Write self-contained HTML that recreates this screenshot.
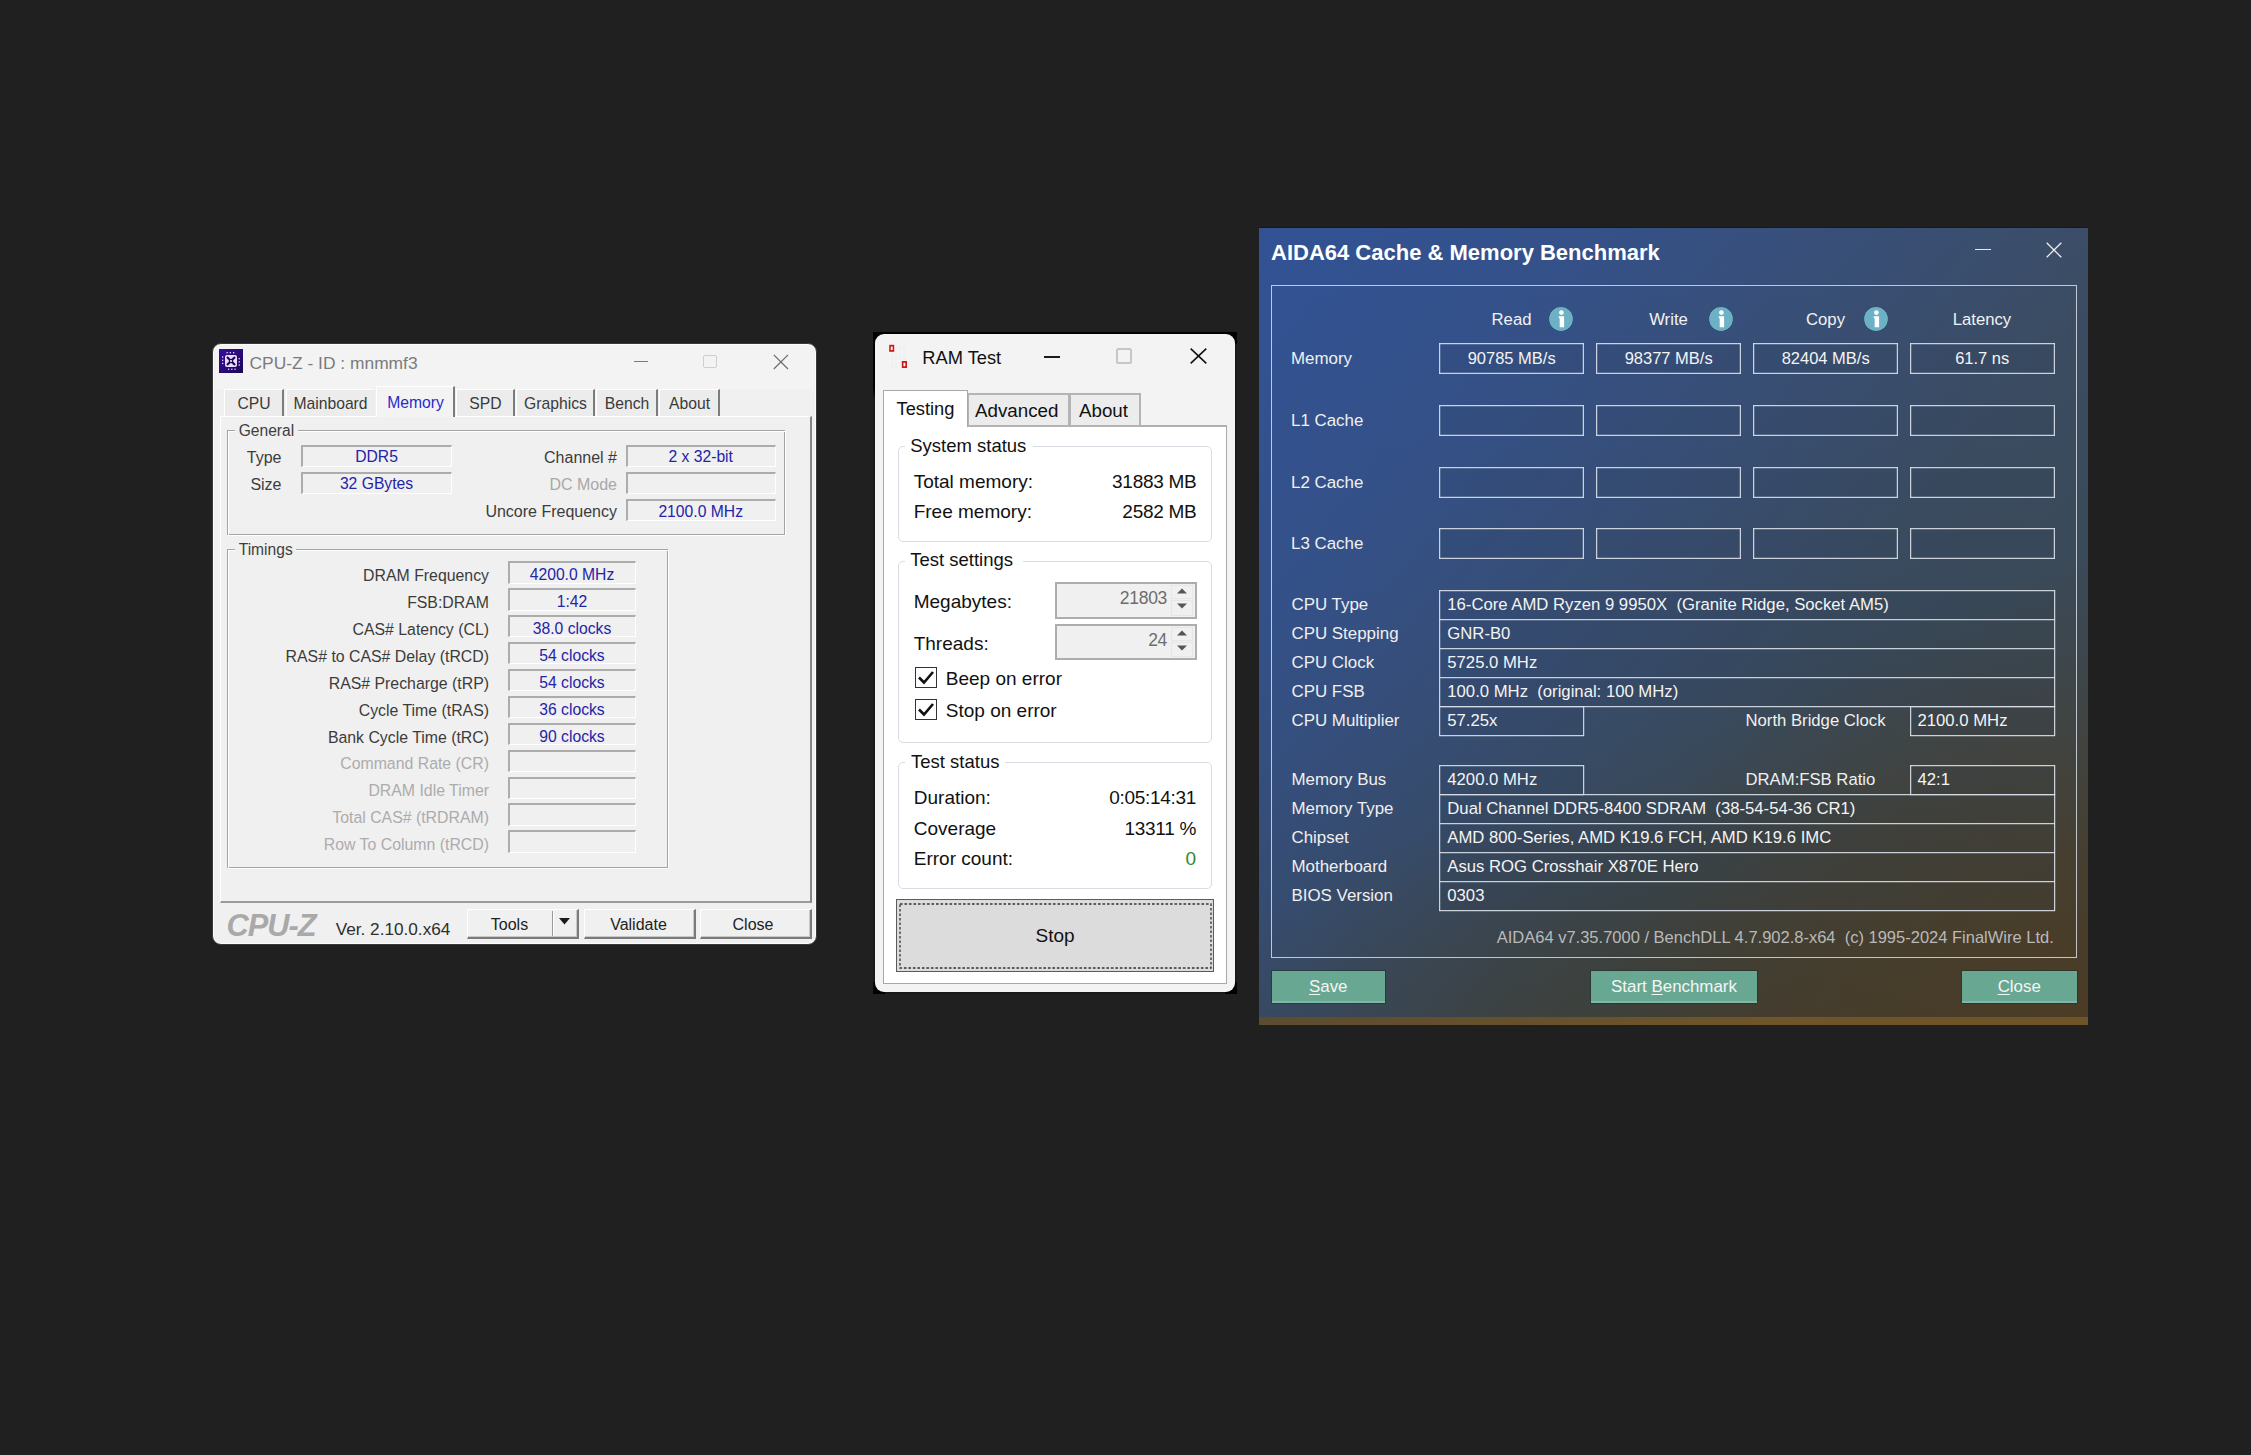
<!DOCTYPE html><html><head><meta charset="utf-8"><style>
html,body{margin:0;padding:0;width:2251px;height:1455px;overflow:hidden;background:#202020;}
body{position:relative;font-family:"Liberation Sans",sans-serif;}
</style></head><body>
<div style="position:absolute;left:212.00px;top:343.00px;width:605.00px;height:601.50px;background:#f0f0f0;border:1px solid #3a3a3a;border-radius:9px;box-sizing:border-box;box-shadow:inset 0 0 0 1px #fbfbfb;"></div>
<div style="position:absolute;left:215.00px;top:345.00px;width:599.00px;height:44.00px;background:#f3f3f3;border-radius:7px 7px 0 0;"></div>
<svg style="position:absolute;left:219px;top:349px" width="24" height="24" viewBox="0 0 24 24">
<defs><linearGradient id="cg" x1="0" y1="0" x2="1" y2="1"><stop offset="0" stop-color="#3a0e9a"/><stop offset="1" stop-color="#1c0656"/></linearGradient></defs>
<rect width="24" height="24" fill="url(#cg)"/>
<rect x="6" y="6" width="12" height="12" rx="2" fill="#eadcff"/>
<path d="M8 8 L16 16 M16 8 L8 16" stroke="#1c0656" stroke-width="2.2"/>
<circle cx="12" cy="12" r="2.2" fill="#1c0656"/><circle cx="12" cy="12" r="1" fill="#fff"/>
<g fill="#e6d6ff"><rect x="7.5" y="3" width="1.3" height="1.3"/><rect x="10.7" y="3" width="1.3" height="1.3"/><rect x="14" y="3" width="1.3" height="1.3"/>
<rect x="9" y="19.6" width="1.3" height="1.3"/><rect x="12.2" y="19.6" width="1.3" height="1.3"/><rect x="15.4" y="19.6" width="1.3" height="1.3"/>
<rect x="3" y="7.4" width="1.3" height="1.3"/><rect x="3" y="10.6" width="1.3" height="1.3"/><rect x="3" y="13.8" width="1.3" height="1.3"/>
<rect x="19.6" y="9" width="1.3" height="1.3"/><rect x="19.6" y="12.2" width="1.3" height="1.3"/><rect x="19.6" y="15.4" width="1.3" height="1.3"/></g>
</svg>
<div style="position:absolute;left:249.50px;top:354.77px;font:400 17.4px/17.4px 'Liberation Sans',sans-serif;color:#7b7b7b;white-space:pre;">CPU-Z - ID : mnmmf3</div>
<div style="position:absolute;left:633.50px;top:360.50px;width:14.50px;height:1.00px;background:#7a7a7a;"></div>
<div style="position:absolute;left:702.50px;top:354.50px;width:14.00px;height:13.50px;border:1px solid #cfcfcf;border-radius:2px;box-sizing:border-box;"></div>
<svg style="position:absolute;left:773px;top:354px" width="16" height="16" viewBox="0 0 16 16"><path d="M0.8 0.8 L15 15 M15 0.8 L0.8 15" stroke="#6a6a6a" stroke-width="1.2"/></svg>
<div style="position:absolute;left:220.00px;top:416.00px;width:591.50px;height:487.00px;border-left:1px solid #fff;border-top:1px solid #fff;border-right:2px solid #858585;border-bottom:2px solid #9a9a9a;box-sizing:border-box;"></div>
<div style="position:absolute;left:224.00px;top:389.00px;width:60.00px;height:27.00px;background:#ececec;border-top:1px solid #fff;border-left:1px solid #fff;border-right:2px solid #7c7c7c;box-sizing:border-box;"></div>
<div style="position:absolute;left:154.00px;width:200px;text-align:center;top:396.21px;font:400 15.7px/15.7px 'Liberation Sans',sans-serif;color:#3a3a3a;white-space:pre;">CPU</div>
<div style="position:absolute;left:286.00px;top:389.00px;width:89.00px;height:27.00px;background:#ececec;border-top:1px solid #fff;border-left:1px solid #fff;border-right:2px solid transparent;box-sizing:border-box;"></div>
<div style="position:absolute;left:230.50px;width:200px;text-align:center;top:396.21px;font:400 15.7px/15.7px 'Liberation Sans',sans-serif;color:#3a3a3a;white-space:pre;">Mainboard</div>
<div style="position:absolute;left:376.00px;top:386.00px;width:79.00px;height:31.00px;background:#f3f3f3;border-top:1px solid #fff;border-left:1px solid #fff;border-right:2px solid #7c7c7c;box-sizing:border-box;"></div>
<div style="position:absolute;left:315.50px;width:200px;text-align:center;top:395.21px;font:400 15.7px/15.7px 'Liberation Sans',sans-serif;color:#2a2acc;white-space:pre;">Memory</div>
<div style="position:absolute;left:456.00px;top:389.00px;width:59.00px;height:27.00px;background:#ececec;border-top:1px solid #fff;border-left:1px solid #fff;border-right:2px solid #7c7c7c;box-sizing:border-box;"></div>
<div style="position:absolute;left:385.50px;width:200px;text-align:center;top:396.21px;font:400 15.7px/15.7px 'Liberation Sans',sans-serif;color:#3a3a3a;white-space:pre;">SPD</div>
<div style="position:absolute;left:516.00px;top:389.00px;width:79.00px;height:27.00px;background:#ececec;border-top:1px solid #fff;border-left:1px solid #fff;border-right:2px solid #7c7c7c;box-sizing:border-box;"></div>
<div style="position:absolute;left:455.50px;width:200px;text-align:center;top:396.21px;font:400 15.7px/15.7px 'Liberation Sans',sans-serif;color:#3a3a3a;white-space:pre;">Graphics</div>
<div style="position:absolute;left:596.00px;top:389.00px;width:62.00px;height:27.00px;background:#ececec;border-top:1px solid #fff;border-left:1px solid #fff;border-right:2px solid #7c7c7c;box-sizing:border-box;"></div>
<div style="position:absolute;left:527.00px;width:200px;text-align:center;top:396.21px;font:400 15.7px/15.7px 'Liberation Sans',sans-serif;color:#3a3a3a;white-space:pre;">Bench</div>
<div style="position:absolute;left:659.00px;top:389.00px;width:61.00px;height:27.00px;background:#ececec;border-top:1px solid #fff;border-left:1px solid #fff;border-right:2px solid #7c7c7c;box-sizing:border-box;"></div>
<div style="position:absolute;left:589.50px;width:200px;text-align:center;top:396.21px;font:400 15.7px/15.7px 'Liberation Sans',sans-serif;color:#3a3a3a;white-space:pre;">About</div>
<div style="position:absolute;left:227.00px;top:429.50px;width:558.00px;height:105.00px;border:1px solid #a4a4a4;box-sizing:border-box;"></div>
<div style="position:absolute;left:228.00px;top:430.50px;width:558.00px;height:105.00px;border:1px solid #ffffff;border-left-color:#fff;box-sizing:border-box;"></div>
<div style="position:absolute;left:227.00px;top:429.50px;width:558.00px;height:105.00px;border:1px solid #a4a4a4;border-right-color:transparent;border-bottom-color:transparent;box-sizing:border-box;"></div>
<div style="position:absolute;left:235.00px;top:420.00px;width:63.00px;height:20.00px;background:#f0f0f0;"></div>
<div style="position:absolute;left:238.70px;top:423.09px;font:400 15.6px/15.6px 'Liberation Sans',sans-serif;color:#3e3e3e;white-space:pre;">General</div>
<div style="position:absolute;left:301.00px;top:444.50px;width:151.00px;height:22.00px;background:#f0f0f0;border-top:2px solid #acacac;border-left:2px solid #acacac;border-right:1px solid #fff;border-bottom:1px solid #fff;box-sizing:border-box;"></div>
<div style="position:absolute;left:301.00px;top:471.50px;width:151.00px;height:22.00px;background:#f0f0f0;border-top:2px solid #acacac;border-left:2px solid #acacac;border-right:1px solid #fff;border-bottom:1px solid #fff;box-sizing:border-box;"></div>
<div style="position:absolute;left:-918.50px;width:1200px;text-align:right;top:450.26px;font:400 16px/16px 'Liberation Sans',sans-serif;color:#3c3c3c;white-space:pre;">Type</div>
<div style="position:absolute;left:276.50px;width:200px;text-align:center;top:449.21px;font:400 15.7px/15.7px 'Liberation Sans',sans-serif;color:#2424a8;white-space:pre;">DDR5</div>
<div style="position:absolute;left:-918.50px;width:1200px;text-align:right;top:476.96px;font:400 16px/16px 'Liberation Sans',sans-serif;color:#3c3c3c;white-space:pre;">Size</div>
<div style="position:absolute;left:276.50px;width:200px;text-align:center;top:476.21px;font:400 15.7px/15.7px 'Liberation Sans',sans-serif;color:#2424a8;white-space:pre;">32 GBytes</div>
<div style="position:absolute;left:625.50px;top:444.50px;width:150.50px;height:22.00px;background:#f0f0f0;border-top:2px solid #acacac;border-left:2px solid #acacac;border-right:1px solid #fff;border-bottom:1px solid #fff;box-sizing:border-box;"></div>
<div style="position:absolute;left:625.50px;top:471.50px;width:150.50px;height:22.00px;background:#f0f0f0;border-top:2px solid #acacac;border-left:2px solid #acacac;border-right:1px solid #fff;border-bottom:1px solid #fff;box-sizing:border-box;"></div>
<div style="position:absolute;left:625.50px;top:498.50px;width:150.50px;height:22.00px;background:#f0f0f0;border-top:2px solid #acacac;border-left:2px solid #acacac;border-right:1px solid #fff;border-bottom:1px solid #fff;box-sizing:border-box;"></div>
<div style="position:absolute;left:-583.00px;width:1200px;text-align:right;top:450.46px;font:400 16px/16px 'Liberation Sans',sans-serif;color:#3c3c3c;white-space:pre;">Channel #</div>
<div style="position:absolute;left:600.70px;width:200px;text-align:center;top:449.21px;font:400 15.7px/15.7px 'Liberation Sans',sans-serif;color:#2424a8;white-space:pre;">2 x 32-bit</div>
<div style="position:absolute;left:-583.00px;width:1200px;text-align:right;top:477.46px;font:400 16px/16px 'Liberation Sans',sans-serif;color:#a8a8a8;white-space:pre;">DC Mode</div>
<div style="position:absolute;left:-583.00px;width:1200px;text-align:right;top:504.46px;font:400 16px/16px 'Liberation Sans',sans-serif;color:#3c3c3c;white-space:pre;">Uncore Frequency</div>
<div style="position:absolute;left:600.70px;width:200px;text-align:center;top:503.71px;font:400 15.7px/15.7px 'Liberation Sans',sans-serif;color:#2424a8;white-space:pre;">2100.0 MHz</div>
<div style="position:absolute;left:226.50px;top:549.00px;width:441.00px;height:318.50px;border:1px solid #a4a4a4;box-sizing:border-box;"></div>
<div style="position:absolute;left:227.50px;top:550.00px;width:441.00px;height:318.50px;border:1px solid #ffffff;border-left-color:#fff;box-sizing:border-box;"></div>
<div style="position:absolute;left:226.50px;top:549.00px;width:441.00px;height:318.50px;border:1px solid #a4a4a4;border-right-color:transparent;border-bottom-color:transparent;box-sizing:border-box;"></div>
<div style="position:absolute;left:235.00px;top:540.00px;width:61.00px;height:20.00px;background:#f0f0f0;"></div>
<div style="position:absolute;left:238.70px;top:542.29px;font:400 15.6px/15.6px 'Liberation Sans',sans-serif;color:#3e3e3e;white-space:pre;">Timings</div>
<div style="position:absolute;left:508.30px;top:561.00px;width:127.70px;height:22.60px;background:#f0f0f0;border-top:2px solid #acacac;border-left:2px solid #acacac;border-right:1px solid #fff;border-bottom:1px solid #fff;box-sizing:border-box;"></div>
<div style="position:absolute;left:-711.00px;width:1200px;text-align:right;top:567.88px;font:400 15.85px/15.85px 'Liberation Sans',sans-serif;color:#3c3c3c;white-space:pre;">DRAM Frequency</div>
<div style="position:absolute;left:472.00px;width:200px;text-align:center;top:567.01px;font:400 15.7px/15.7px 'Liberation Sans',sans-serif;color:#2424a8;white-space:pre;">4200.0 MHz</div>
<div style="position:absolute;left:508.30px;top:587.94px;width:127.70px;height:22.60px;background:#f0f0f0;border-top:2px solid #acacac;border-left:2px solid #acacac;border-right:1px solid #fff;border-bottom:1px solid #fff;box-sizing:border-box;"></div>
<div style="position:absolute;left:-711.00px;width:1200px;text-align:right;top:594.82px;font:400 15.85px/15.85px 'Liberation Sans',sans-serif;color:#3c3c3c;white-space:pre;">FSB:DRAM</div>
<div style="position:absolute;left:472.00px;width:200px;text-align:center;top:593.95px;font:400 15.7px/15.7px 'Liberation Sans',sans-serif;color:#2424a8;white-space:pre;">1:42</div>
<div style="position:absolute;left:508.30px;top:614.88px;width:127.70px;height:22.60px;background:#f0f0f0;border-top:2px solid #acacac;border-left:2px solid #acacac;border-right:1px solid #fff;border-bottom:1px solid #fff;box-sizing:border-box;"></div>
<div style="position:absolute;left:-711.00px;width:1200px;text-align:right;top:621.76px;font:400 15.85px/15.85px 'Liberation Sans',sans-serif;color:#3c3c3c;white-space:pre;">CAS# Latency (CL)</div>
<div style="position:absolute;left:472.00px;width:200px;text-align:center;top:620.89px;font:400 15.7px/15.7px 'Liberation Sans',sans-serif;color:#2424a8;white-space:pre;">38.0 clocks</div>
<div style="position:absolute;left:508.30px;top:641.82px;width:127.70px;height:22.60px;background:#f0f0f0;border-top:2px solid #acacac;border-left:2px solid #acacac;border-right:1px solid #fff;border-bottom:1px solid #fff;box-sizing:border-box;"></div>
<div style="position:absolute;left:-711.00px;width:1200px;text-align:right;top:648.70px;font:400 15.85px/15.85px 'Liberation Sans',sans-serif;color:#3c3c3c;white-space:pre;">RAS# to CAS# Delay (tRCD)</div>
<div style="position:absolute;left:472.00px;width:200px;text-align:center;top:647.83px;font:400 15.7px/15.7px 'Liberation Sans',sans-serif;color:#2424a8;white-space:pre;">54 clocks</div>
<div style="position:absolute;left:508.30px;top:668.76px;width:127.70px;height:22.60px;background:#f0f0f0;border-top:2px solid #acacac;border-left:2px solid #acacac;border-right:1px solid #fff;border-bottom:1px solid #fff;box-sizing:border-box;"></div>
<div style="position:absolute;left:-711.00px;width:1200px;text-align:right;top:675.64px;font:400 15.85px/15.85px 'Liberation Sans',sans-serif;color:#3c3c3c;white-space:pre;">RAS# Precharge (tRP)</div>
<div style="position:absolute;left:472.00px;width:200px;text-align:center;top:674.77px;font:400 15.7px/15.7px 'Liberation Sans',sans-serif;color:#2424a8;white-space:pre;">54 clocks</div>
<div style="position:absolute;left:508.30px;top:695.70px;width:127.70px;height:22.60px;background:#f0f0f0;border-top:2px solid #acacac;border-left:2px solid #acacac;border-right:1px solid #fff;border-bottom:1px solid #fff;box-sizing:border-box;"></div>
<div style="position:absolute;left:-711.00px;width:1200px;text-align:right;top:702.58px;font:400 15.85px/15.85px 'Liberation Sans',sans-serif;color:#3c3c3c;white-space:pre;">Cycle Time (tRAS)</div>
<div style="position:absolute;left:472.00px;width:200px;text-align:center;top:701.71px;font:400 15.7px/15.7px 'Liberation Sans',sans-serif;color:#2424a8;white-space:pre;">36 clocks</div>
<div style="position:absolute;left:508.30px;top:722.64px;width:127.70px;height:22.60px;background:#f0f0f0;border-top:2px solid #acacac;border-left:2px solid #acacac;border-right:1px solid #fff;border-bottom:1px solid #fff;box-sizing:border-box;"></div>
<div style="position:absolute;left:-711.00px;width:1200px;text-align:right;top:729.52px;font:400 15.85px/15.85px 'Liberation Sans',sans-serif;color:#3c3c3c;white-space:pre;">Bank Cycle Time (tRC)</div>
<div style="position:absolute;left:472.00px;width:200px;text-align:center;top:728.65px;font:400 15.7px/15.7px 'Liberation Sans',sans-serif;color:#2424a8;white-space:pre;">90 clocks</div>
<div style="position:absolute;left:508.30px;top:749.58px;width:127.70px;height:22.60px;background:#f0f0f0;border-top:2px solid #acacac;border-left:2px solid #acacac;border-right:1px solid #fff;border-bottom:1px solid #fff;box-sizing:border-box;"></div>
<div style="position:absolute;left:-711.00px;width:1200px;text-align:right;top:756.46px;font:400 15.85px/15.85px 'Liberation Sans',sans-serif;color:#acacac;white-space:pre;">Command Rate (CR)</div>
<div style="position:absolute;left:508.30px;top:776.52px;width:127.70px;height:22.60px;background:#f0f0f0;border-top:2px solid #acacac;border-left:2px solid #acacac;border-right:1px solid #fff;border-bottom:1px solid #fff;box-sizing:border-box;"></div>
<div style="position:absolute;left:-711.00px;width:1200px;text-align:right;top:783.40px;font:400 15.85px/15.85px 'Liberation Sans',sans-serif;color:#acacac;white-space:pre;">DRAM Idle Timer</div>
<div style="position:absolute;left:508.30px;top:803.46px;width:127.70px;height:22.60px;background:#f0f0f0;border-top:2px solid #acacac;border-left:2px solid #acacac;border-right:1px solid #fff;border-bottom:1px solid #fff;box-sizing:border-box;"></div>
<div style="position:absolute;left:-711.00px;width:1200px;text-align:right;top:810.34px;font:400 15.85px/15.85px 'Liberation Sans',sans-serif;color:#acacac;white-space:pre;">Total CAS# (tRDRAM)</div>
<div style="position:absolute;left:508.30px;top:830.40px;width:127.70px;height:22.60px;background:#f0f0f0;border-top:2px solid #acacac;border-left:2px solid #acacac;border-right:1px solid #fff;border-bottom:1px solid #fff;box-sizing:border-box;"></div>
<div style="position:absolute;left:-711.00px;width:1200px;text-align:right;top:837.28px;font:400 15.85px/15.85px 'Liberation Sans',sans-serif;color:#acacac;white-space:pre;">Row To Column (tRCD)</div>
<div style="position:absolute;left:226.50px;top:911.13px;font:700 30.8px/30.8px 'Liberation Sans',sans-serif;color:#a9a9a9;white-space:pre;font-style:italic;letter-spacing:-1px;">CPU-Z</div>
<div style="position:absolute;left:335.70px;top:920.74px;font:400 17.2px/17.2px 'Liberation Sans',sans-serif;color:#2e2e2e;white-space:pre;">Ver. 2.10.0.x64</div>
<div style="position:absolute;left:467.00px;top:909.00px;width:111.50px;height:30.00px;background:#f0f0f0;border-top:1px solid #fff;border-left:1px solid #fff;border-right:2px solid #7a7a7a;border-bottom:2px solid #7a7a7a;box-sizing:border-box;box-shadow:inset -1px -1px 0 #c8c8c8;"></div>
<div style="position:absolute;left:551.50px;top:911.00px;width:1.50px;height:25.00px;background:#9a9a9a;"></div>
<div style="position:absolute;left:553.00px;top:911.00px;width:1.00px;height:25.00px;background:#fff;"></div>
<div style="position:absolute;left:409.50px;width:200px;text-align:center;top:916.76px;font:400 16px/16px 'Liberation Sans',sans-serif;color:#222;white-space:pre;">Tools</div>
<svg style="position:absolute;left:558.5px;top:918px" width="11" height="7" viewBox="0 0 11 7"><path d="M0 0 H11 L5.5 6.5 Z" fill="#1a1a1a"/></svg>
<div style="position:absolute;left:583.50px;top:909.00px;width:112.50px;height:30.00px;background:#f0f0f0;border-top:1px solid #fff;border-left:1px solid #fff;border-right:2px solid #7a7a7a;border-bottom:2px solid #7a7a7a;box-sizing:border-box;box-shadow:inset -1px -1px 0 #c8c8c8;"></div>
<div style="position:absolute;left:538.50px;width:200px;text-align:center;top:916.76px;font:400 16px/16px 'Liberation Sans',sans-serif;color:#222;white-space:pre;">Validate</div>
<div style="position:absolute;left:700.00px;top:909.00px;width:111.50px;height:30.00px;background:#f0f0f0;border-top:1px solid #fff;border-left:1px solid #fff;border-right:2px solid #7a7a7a;border-bottom:2px solid #7a7a7a;box-sizing:border-box;box-shadow:inset -1px -1px 0 #c8c8c8;"></div>
<div style="position:absolute;left:653.00px;width:200px;text-align:center;top:916.76px;font:400 16px/16px 'Liberation Sans',sans-serif;color:#222;white-space:pre;">Close</div>
<div style="position:absolute;left:873.00px;top:332.00px;width:364.00px;height:662.00px;background:#1a1a1a;"></div>
<div style="position:absolute;left:873.00px;top:332.00px;width:12.00px;height:12.00px;background:#000;"></div>
<div style="position:absolute;left:1225.00px;top:332.00px;width:12.00px;height:12.00px;background:#000;"></div>
<div style="position:absolute;left:873.00px;top:982.00px;width:12.00px;height:12.00px;background:#000;"></div>
<div style="position:absolute;left:1225.00px;top:982.00px;width:12.00px;height:12.00px;background:#000;"></div>
<div style="position:absolute;left:873.00px;top:332.00px;width:364.00px;height:2.00px;background:#000;"></div>
<div style="position:absolute;left:873.00px;top:332.00px;width:2.00px;height:70.00px;background:linear-gradient(180deg,#000 80%,#1e1e1e);"></div>
<div style="position:absolute;left:875.00px;top:334.00px;width:360.00px;height:658.00px;background:#f3f3f3;border-radius:9px;"></div>
<svg style="position:absolute;left:886px;top:342px" width="30" height="30" viewBox="0 0 30 30">
<g fill="none" stroke="#ececec" stroke-width="1"><path d="M10 3v6M14 3v6M18 3v6M6 12v6M10 12v6M14 12v6M18 12v6M6 20v6M10 20v6M18 20v6"/></g>
<rect x="3.2" y="2.8" width="5" height="7" fill="#d01818"/><rect x="4.8" y="4.6" width="1.8" height="3.4" fill="#fff"/>
<rect x="15.8" y="19" width="5.2" height="7" fill="#d01818"/><rect x="17.5" y="20.8" width="1.8" height="3.4" fill="#fff"/>
</svg>
<div style="position:absolute;left:922.30px;top:348.81px;font:400 18.3px/18.3px 'Liberation Sans',sans-serif;color:#111;white-space:pre;">RAM Test</div>
<div style="position:absolute;left:1043.50px;top:355.70px;width:16.50px;height:2.00px;background:#1a1a1a;"></div>
<div style="position:absolute;left:1116.00px;top:347.50px;width:16.00px;height:16.00px;border:2px solid #c6c6c6;border-radius:2.5px;box-sizing:border-box;"></div>
<svg style="position:absolute;left:1190px;top:347.5px" width="17" height="16" viewBox="0 0 17 16"><path d="M0.7 0.7 L16.3 15.3 M16.3 0.7 L0.7 15.3" stroke="#111" stroke-width="1.6"/></svg>
<div style="position:absolute;left:883.00px;top:425.00px;width:344.00px;height:559.00px;background:#fff;border:1px solid #a8a8a8;border-top:2px solid #b0b0b0;box-sizing:border-box;"></div>
<div style="position:absolute;left:967.00px;top:393.00px;width:103.00px;height:34.00px;background:#ececec;border:2px solid #b4b4b4;box-sizing:border-box;"></div>
<div style="position:absolute;left:1069.00px;top:393.00px;width:72.00px;height:34.00px;background:#ececec;border:2px solid #b4b4b4;box-sizing:border-box;"></div>
<div style="position:absolute;left:883.00px;top:390.00px;width:85.00px;height:37.00px;background:#fff;border:1px solid #a8a8a8;border-bottom:none;box-sizing:border-box;"></div>
<div style="position:absolute;left:896.50px;top:399.81px;font:400 18.3px/18.3px 'Liberation Sans',sans-serif;color:#111;white-space:pre;">Testing</div>
<div style="position:absolute;left:975.00px;top:401.63px;font:400 18.75px/18.75px 'Liberation Sans',sans-serif;color:#111;white-space:pre;">Advanced</div>
<div style="position:absolute;left:1079.00px;top:401.63px;font:400 18.75px/18.75px 'Liberation Sans',sans-serif;color:#111;white-space:pre;">About</div>
<div style="position:absolute;left:897.50px;top:445.50px;width:314.50px;height:96.50px;border:1.3px solid #d8dde4;border-radius:5px;box-sizing:border-box;"></div>
<div style="position:absolute;left:905.00px;top:435.50px;width:128.00px;height:20.00px;background:#fff;"></div>
<div style="position:absolute;left:910.20px;top:436.94px;font:400 18.5px/18.5px 'Liberation Sans',sans-serif;color:#111;white-space:pre;">System status</div>
<div style="position:absolute;left:913.70px;top:471.92px;font:400 19px/19px 'Liberation Sans',sans-serif;color:#111;white-space:pre;">Total memory:</div>
<div style="position:absolute;left:-3.70px;width:1200px;text-align:right;top:471.92px;font:400 19px/19px 'Liberation Sans',sans-serif;color:#111;white-space:pre;letter-spacing:-0.3px;">31883 MB</div>
<div style="position:absolute;left:913.70px;top:502.42px;font:400 19px/19px 'Liberation Sans',sans-serif;color:#111;white-space:pre;">Free memory:</div>
<div style="position:absolute;left:-3.70px;width:1200px;text-align:right;top:502.42px;font:400 19px/19px 'Liberation Sans',sans-serif;color:#111;white-space:pre;letter-spacing:-0.3px;">2582 MB</div>
<div style="position:absolute;left:897.50px;top:561.00px;width:314.50px;height:182.00px;border:1.3px solid #d8dde4;border-radius:5px;box-sizing:border-box;"></div>
<div style="position:absolute;left:905.00px;top:551.00px;width:118.00px;height:20.00px;background:#fff;"></div>
<div style="position:absolute;left:910.20px;top:551.34px;font:400 18.5px/18.5px 'Liberation Sans',sans-serif;color:#111;white-space:pre;">Test settings</div>
<div style="position:absolute;left:913.70px;top:592.32px;font:400 19px/19px 'Liberation Sans',sans-serif;color:#111;white-space:pre;">Megabytes:</div>
<div style="position:absolute;left:913.70px;top:633.92px;font:400 19px/19px 'Liberation Sans',sans-serif;color:#111;white-space:pre;">Threads:</div>
<div style="position:absolute;left:1055.00px;top:581.50px;width:141.50px;height:37.00px;background:#f0f0f0;border:2px solid #adadad;box-sizing:border-box;"></div>
<div style="position:absolute;left:1171.00px;top:584.50px;width:22.00px;height:31.00px;background:#f0f0f0;"></div>
<div style="position:absolute;left:1171.00px;top:584.50px;width:22.00px;height:14.00px;border:1px solid #e6e6e6;box-sizing:border-box;"></div>
<div style="position:absolute;left:1171.00px;top:599.50px;width:22.00px;height:16.00px;border:1px solid #e6e6e6;box-sizing:border-box;"></div>
<svg style="position:absolute;left:1177px;top:588.0px" width="10" height="6" viewBox="0 0 10 6"><path d="M0 5.5 L5 0.5 L10 5.5 Z" fill="#555"/></svg>
<svg style="position:absolute;left:1177px;top:602.5px" width="10" height="6" viewBox="0 0 10 6"><path d="M0 0.5 L5 5.5 L10 0.5 Z" fill="#555"/></svg>
<div style="position:absolute;left:-33.00px;width:1200px;text-align:right;top:590.19px;font:400 17.5px/17.5px 'Liberation Sans',sans-serif;color:#6d6d6d;white-space:pre;letter-spacing:-0.3px;">21803</div>
<div style="position:absolute;left:1055.00px;top:623.50px;width:141.50px;height:36.50px;background:#f0f0f0;border:2px solid #adadad;box-sizing:border-box;"></div>
<div style="position:absolute;left:1171.00px;top:626.50px;width:22.00px;height:30.50px;background:#f0f0f0;"></div>
<div style="position:absolute;left:1171.00px;top:626.50px;width:22.00px;height:14.00px;border:1px solid #e6e6e6;box-sizing:border-box;"></div>
<div style="position:absolute;left:1171.00px;top:641.50px;width:22.00px;height:15.50px;border:1px solid #e6e6e6;box-sizing:border-box;"></div>
<svg style="position:absolute;left:1177px;top:630.0px" width="10" height="6" viewBox="0 0 10 6"><path d="M0 5.5 L5 0.5 L10 5.5 Z" fill="#555"/></svg>
<svg style="position:absolute;left:1177px;top:644.5px" width="10" height="6" viewBox="0 0 10 6"><path d="M0 0.5 L5 5.5 L10 0.5 Z" fill="#555"/></svg>
<div style="position:absolute;left:-33.00px;width:1200px;text-align:right;top:632.19px;font:400 17.5px/17.5px 'Liberation Sans',sans-serif;color:#6d6d6d;white-space:pre;letter-spacing:-0.3px;">24</div>
<div style="position:absolute;left:915.20px;top:667.30px;width:22.00px;height:20.50px;background:#fff;border:1.8px solid #333;box-sizing:border-box;"></div>
<svg style="position:absolute;left:915.2px;top:667.3px" width="22" height="20.5" viewBox="0 0 22 20.5"><path d="M4 10.5 L9 15.5 L18 5" fill="none" stroke="#111" stroke-width="2.6"/></svg>
<div style="position:absolute;left:945.80px;top:669.02px;font:400 19px/19px 'Liberation Sans',sans-serif;color:#111;white-space:pre;">Beep on error</div>
<div style="position:absolute;left:915.20px;top:699.40px;width:22.00px;height:20.50px;background:#fff;border:1.8px solid #333;box-sizing:border-box;"></div>
<svg style="position:absolute;left:915.2px;top:699.4px" width="22" height="20.5" viewBox="0 0 22 20.5"><path d="M4 10.5 L9 15.5 L18 5" fill="none" stroke="#111" stroke-width="2.6"/></svg>
<div style="position:absolute;left:945.80px;top:701.12px;font:400 19px/19px 'Liberation Sans',sans-serif;color:#111;white-space:pre;">Stop on error</div>
<div style="position:absolute;left:897.50px;top:761.50px;width:314.50px;height:127.00px;border:1.3px solid #d8dde4;border-radius:5px;box-sizing:border-box;"></div>
<div style="position:absolute;left:905.00px;top:751.50px;width:100.00px;height:20.00px;background:#fff;"></div>
<div style="position:absolute;left:911.00px;top:753.14px;font:400 18.5px/18.5px 'Liberation Sans',sans-serif;color:#111;white-space:pre;">Test status</div>
<div style="position:absolute;left:913.80px;top:787.92px;font:400 19px/19px 'Liberation Sans',sans-serif;color:#111;white-space:pre;">Duration:</div>
<div style="position:absolute;left:-4.00px;width:1200px;text-align:right;top:787.92px;font:400 19px/19px 'Liberation Sans',sans-serif;color:#111;white-space:pre;letter-spacing:-0.3px;">0:05:14:31</div>
<div style="position:absolute;left:913.80px;top:818.52px;font:400 19px/19px 'Liberation Sans',sans-serif;color:#111;white-space:pre;">Coverage</div>
<div style="position:absolute;left:-4.00px;width:1200px;text-align:right;top:818.52px;font:400 19px/19px 'Liberation Sans',sans-serif;color:#111;white-space:pre;letter-spacing:-0.3px;">13311 %</div>
<div style="position:absolute;left:913.80px;top:849.12px;font:400 19px/19px 'Liberation Sans',sans-serif;color:#111;white-space:pre;">Error count:</div>
<div style="position:absolute;left:-4.00px;width:1200px;text-align:right;top:849.12px;font:400 19px/19px 'Liberation Sans',sans-serif;color:#2e8b2e;white-space:pre;">0</div>
<div style="position:absolute;left:896.00px;top:899.00px;width:318.00px;height:72.50px;background:#dcdcdc;border:1.5px solid #5a5a5a;box-sizing:border-box;"></div>
<svg style="position:absolute;left:899px;top:902.5px" width="313" height="66" viewBox="0 0 313 66"><rect x="1" y="1" width="311" height="64" fill="none" stroke="#333" stroke-width="1.3" stroke-dasharray="2.6 1.9"/></svg>
<div style="position:absolute;left:955.00px;width:200px;text-align:center;top:926.22px;font:400 19px/19px 'Liberation Sans',sans-serif;color:#111;white-space:pre;">Stop</div>
<div style="position:absolute;left:1259.00px;top:227.00px;width:829.00px;height:1.00px;background:#181818;"></div>
<div style="position:absolute;left:1259.00px;top:228.00px;width:829.00px;height:797.00px;background:radial-gradient(ellipse 470px 460px at 100% 100%, rgba(76,60,36,0.95) 0%, rgba(76,60,36,0.55) 45%, rgba(76,60,36,0) 100%),radial-gradient(ellipse 650px 260px at 72% 100%, rgba(66,58,44,0.75) 0%, rgba(66,58,44,0.35) 50%, rgba(66,58,44,0) 100%),linear-gradient(128deg, rgba(50,82,148,1) 0%, rgba(50,82,148,0.8) 22%, rgba(50,82,148,0.45) 42%, rgba(50,82,148,0.12) 60%, rgba(50,82,148,0) 75%),linear-gradient(180deg, #3d4c5e 0%, #3a4956 55%, #3a4441 100%);"></div>
<div style="position:absolute;left:1259.00px;top:1017.00px;width:829.00px;height:8.00px;background:linear-gradient(90deg,#5d4c30,#6f5529 60%,#6e5427);"></div>
<div style="position:absolute;left:1271.00px;top:242.38px;font:700 22px/22px 'Liberation Sans',sans-serif;color:#ffffff;white-space:pre;">AIDA64 Cache &amp; Memory Benchmark</div>
<div style="position:absolute;left:1975.00px;top:248.50px;width:15.50px;height:1.50px;background:#e8e8e8;"></div>
<svg style="position:absolute;left:2045.5px;top:242px" width="16" height="16" viewBox="0 0 16 16"><path d="M0.7 0.7 L15.3 15.3 M15.3 0.7 L0.7 15.3" stroke="#f0f0f0" stroke-width="1.3"/></svg>
<div style="position:absolute;left:1271.00px;top:285.00px;width:805.50px;height:673.00px;border:1.4px solid rgba(215,222,232,0.85);box-sizing:border-box;"></div>
<div style="position:absolute;left:1411.50px;width:200px;text-align:center;top:312.16px;font:400 16.7px/16.7px 'Liberation Sans',sans-serif;color:#f2f2f2;white-space:pre;">Read</div>
<svg style="position:absolute;left:1549px;top:307px" width="24" height="24" viewBox="0 0 24 24"><circle cx="12" cy="12" r="12.6" fill="rgba(30,55,85,0.35)"/><circle cx="12" cy="12" r="11.9" fill="#6db2c4"/><circle cx="12.4" cy="5.6" r="2.35" fill="#fff"/><path d="M9.8 9.3 H15.1 V20.2 H10.7 V11.3 H9.8 Z" fill="#fff"/></svg>
<div style="position:absolute;left:1568.50px;width:200px;text-align:center;top:312.16px;font:400 16.7px/16.7px 'Liberation Sans',sans-serif;color:#f2f2f2;white-space:pre;">Write</div>
<svg style="position:absolute;left:1709px;top:307px" width="24" height="24" viewBox="0 0 24 24"><circle cx="12" cy="12" r="12.6" fill="rgba(30,55,85,0.35)"/><circle cx="12" cy="12" r="11.9" fill="#6db2c4"/><circle cx="12.4" cy="5.6" r="2.35" fill="#fff"/><path d="M9.8 9.3 H15.1 V20.2 H10.7 V11.3 H9.8 Z" fill="#fff"/></svg>
<div style="position:absolute;left:1725.50px;width:200px;text-align:center;top:312.16px;font:400 16.7px/16.7px 'Liberation Sans',sans-serif;color:#f2f2f2;white-space:pre;">Copy</div>
<svg style="position:absolute;left:1864px;top:307px" width="24" height="24" viewBox="0 0 24 24"><circle cx="12" cy="12" r="12.6" fill="rgba(30,55,85,0.35)"/><circle cx="12" cy="12" r="11.9" fill="#6db2c4"/><circle cx="12.4" cy="5.6" r="2.35" fill="#fff"/><path d="M9.8 9.3 H15.1 V20.2 H10.7 V11.3 H9.8 Z" fill="#fff"/></svg>
<div style="position:absolute;left:1882.00px;width:200px;text-align:center;top:312.16px;font:400 16.7px/16.7px 'Liberation Sans',sans-serif;color:#f2f2f2;white-space:pre;">Latency</div>
<div style="position:absolute;left:1291.00px;top:350.99px;font:400 16.9px/16.9px 'Liberation Sans',sans-serif;color:#f0f0f0;white-space:pre;">Memory</div>
<div style="position:absolute;left:1439.00px;top:343.00px;width:144.00px;height:29.50px;background:rgba(40,60,80,0.12);"></div>
<div style="position:absolute;left:1439.00px;top:343.00px;width:145.00px;height:1.00px;background:rgba(214,221,230,0.92);"></div>
<div style="position:absolute;left:1439.00px;top:372.50px;width:145.00px;height:1.00px;background:rgba(214,221,230,0.92);"></div>
<div style="position:absolute;left:1439.00px;top:343.00px;width:1.00px;height:30.50px;background:rgba(214,221,230,0.92);"></div>
<div style="position:absolute;left:1583.00px;top:343.00px;width:1.00px;height:30.50px;background:rgba(214,221,230,0.92);"></div>
<div style="position:absolute;left:1439.00px;top:344.00px;width:144.00px;height:1.00px;background:rgba(214,221,230,0.22);"></div>
<div style="position:absolute;left:1439.00px;top:371.50px;width:144.00px;height:1.00px;background:rgba(214,221,230,0.22);"></div>
<div style="position:absolute;left:1440.00px;top:343.00px;width:1.00px;height:29.50px;background:rgba(214,221,230,0.22);"></div>
<div style="position:absolute;left:1582.00px;top:343.00px;width:1.00px;height:29.50px;background:rgba(214,221,230,0.22);"></div>
<div style="position:absolute;left:1411.70px;width:200px;text-align:center;top:349.83px;font:400 16.5px/16.5px 'Liberation Sans',sans-serif;color:#f4f4f4;white-space:pre;">90785 MB/s</div>
<div style="position:absolute;left:1596.00px;top:343.00px;width:144.00px;height:29.50px;background:rgba(40,60,80,0.12);"></div>
<div style="position:absolute;left:1596.00px;top:343.00px;width:145.00px;height:1.00px;background:rgba(214,221,230,0.92);"></div>
<div style="position:absolute;left:1596.00px;top:372.50px;width:145.00px;height:1.00px;background:rgba(214,221,230,0.92);"></div>
<div style="position:absolute;left:1596.00px;top:343.00px;width:1.00px;height:30.50px;background:rgba(214,221,230,0.92);"></div>
<div style="position:absolute;left:1740.00px;top:343.00px;width:1.00px;height:30.50px;background:rgba(214,221,230,0.92);"></div>
<div style="position:absolute;left:1596.00px;top:344.00px;width:144.00px;height:1.00px;background:rgba(214,221,230,0.22);"></div>
<div style="position:absolute;left:1596.00px;top:371.50px;width:144.00px;height:1.00px;background:rgba(214,221,230,0.22);"></div>
<div style="position:absolute;left:1597.00px;top:343.00px;width:1.00px;height:29.50px;background:rgba(214,221,230,0.22);"></div>
<div style="position:absolute;left:1739.00px;top:343.00px;width:1.00px;height:29.50px;background:rgba(214,221,230,0.22);"></div>
<div style="position:absolute;left:1568.70px;width:200px;text-align:center;top:349.83px;font:400 16.5px/16.5px 'Liberation Sans',sans-serif;color:#f4f4f4;white-space:pre;">98377 MB/s</div>
<div style="position:absolute;left:1753.00px;top:343.00px;width:144.00px;height:29.50px;background:rgba(40,60,80,0.12);"></div>
<div style="position:absolute;left:1753.00px;top:343.00px;width:145.00px;height:1.00px;background:rgba(214,221,230,0.92);"></div>
<div style="position:absolute;left:1753.00px;top:372.50px;width:145.00px;height:1.00px;background:rgba(214,221,230,0.92);"></div>
<div style="position:absolute;left:1753.00px;top:343.00px;width:1.00px;height:30.50px;background:rgba(214,221,230,0.92);"></div>
<div style="position:absolute;left:1897.00px;top:343.00px;width:1.00px;height:30.50px;background:rgba(214,221,230,0.92);"></div>
<div style="position:absolute;left:1753.00px;top:344.00px;width:144.00px;height:1.00px;background:rgba(214,221,230,0.22);"></div>
<div style="position:absolute;left:1753.00px;top:371.50px;width:144.00px;height:1.00px;background:rgba(214,221,230,0.22);"></div>
<div style="position:absolute;left:1754.00px;top:343.00px;width:1.00px;height:29.50px;background:rgba(214,221,230,0.22);"></div>
<div style="position:absolute;left:1896.00px;top:343.00px;width:1.00px;height:29.50px;background:rgba(214,221,230,0.22);"></div>
<div style="position:absolute;left:1725.70px;width:200px;text-align:center;top:349.83px;font:400 16.5px/16.5px 'Liberation Sans',sans-serif;color:#f4f4f4;white-space:pre;">82404 MB/s</div>
<div style="position:absolute;left:1909.50px;top:343.00px;width:144.00px;height:29.50px;background:rgba(40,60,80,0.12);"></div>
<div style="position:absolute;left:1909.50px;top:343.00px;width:145.00px;height:1.00px;background:rgba(214,221,230,0.92);"></div>
<div style="position:absolute;left:1909.50px;top:372.50px;width:145.00px;height:1.00px;background:rgba(214,221,230,0.92);"></div>
<div style="position:absolute;left:1909.50px;top:343.00px;width:1.00px;height:30.50px;background:rgba(214,221,230,0.92);"></div>
<div style="position:absolute;left:2053.50px;top:343.00px;width:1.00px;height:30.50px;background:rgba(214,221,230,0.92);"></div>
<div style="position:absolute;left:1909.50px;top:344.00px;width:144.00px;height:1.00px;background:rgba(214,221,230,0.22);"></div>
<div style="position:absolute;left:1909.50px;top:371.50px;width:144.00px;height:1.00px;background:rgba(214,221,230,0.22);"></div>
<div style="position:absolute;left:1910.50px;top:343.00px;width:1.00px;height:29.50px;background:rgba(214,221,230,0.22);"></div>
<div style="position:absolute;left:2052.50px;top:343.00px;width:1.00px;height:29.50px;background:rgba(214,221,230,0.22);"></div>
<div style="position:absolute;left:1882.20px;width:200px;text-align:center;top:349.83px;font:400 16.5px/16.5px 'Liberation Sans',sans-serif;color:#f4f4f4;white-space:pre;">61.7 ns</div>
<div style="position:absolute;left:1291.00px;top:412.99px;font:400 16.9px/16.9px 'Liberation Sans',sans-serif;color:#f0f0f0;white-space:pre;">L1 Cache</div>
<div style="position:absolute;left:1439.00px;top:405.00px;width:144.00px;height:29.50px;background:rgba(40,60,80,0.12);"></div>
<div style="position:absolute;left:1439.00px;top:405.00px;width:145.00px;height:1.00px;background:rgba(214,221,230,0.92);"></div>
<div style="position:absolute;left:1439.00px;top:434.50px;width:145.00px;height:1.00px;background:rgba(214,221,230,0.92);"></div>
<div style="position:absolute;left:1439.00px;top:405.00px;width:1.00px;height:30.50px;background:rgba(214,221,230,0.92);"></div>
<div style="position:absolute;left:1583.00px;top:405.00px;width:1.00px;height:30.50px;background:rgba(214,221,230,0.92);"></div>
<div style="position:absolute;left:1439.00px;top:406.00px;width:144.00px;height:1.00px;background:rgba(214,221,230,0.22);"></div>
<div style="position:absolute;left:1439.00px;top:433.50px;width:144.00px;height:1.00px;background:rgba(214,221,230,0.22);"></div>
<div style="position:absolute;left:1440.00px;top:405.00px;width:1.00px;height:29.50px;background:rgba(214,221,230,0.22);"></div>
<div style="position:absolute;left:1582.00px;top:405.00px;width:1.00px;height:29.50px;background:rgba(214,221,230,0.22);"></div>
<div style="position:absolute;left:1596.00px;top:405.00px;width:144.00px;height:29.50px;background:rgba(40,60,80,0.12);"></div>
<div style="position:absolute;left:1596.00px;top:405.00px;width:145.00px;height:1.00px;background:rgba(214,221,230,0.92);"></div>
<div style="position:absolute;left:1596.00px;top:434.50px;width:145.00px;height:1.00px;background:rgba(214,221,230,0.92);"></div>
<div style="position:absolute;left:1596.00px;top:405.00px;width:1.00px;height:30.50px;background:rgba(214,221,230,0.92);"></div>
<div style="position:absolute;left:1740.00px;top:405.00px;width:1.00px;height:30.50px;background:rgba(214,221,230,0.92);"></div>
<div style="position:absolute;left:1596.00px;top:406.00px;width:144.00px;height:1.00px;background:rgba(214,221,230,0.22);"></div>
<div style="position:absolute;left:1596.00px;top:433.50px;width:144.00px;height:1.00px;background:rgba(214,221,230,0.22);"></div>
<div style="position:absolute;left:1597.00px;top:405.00px;width:1.00px;height:29.50px;background:rgba(214,221,230,0.22);"></div>
<div style="position:absolute;left:1739.00px;top:405.00px;width:1.00px;height:29.50px;background:rgba(214,221,230,0.22);"></div>
<div style="position:absolute;left:1753.00px;top:405.00px;width:144.00px;height:29.50px;background:rgba(40,60,80,0.12);"></div>
<div style="position:absolute;left:1753.00px;top:405.00px;width:145.00px;height:1.00px;background:rgba(214,221,230,0.92);"></div>
<div style="position:absolute;left:1753.00px;top:434.50px;width:145.00px;height:1.00px;background:rgba(214,221,230,0.92);"></div>
<div style="position:absolute;left:1753.00px;top:405.00px;width:1.00px;height:30.50px;background:rgba(214,221,230,0.92);"></div>
<div style="position:absolute;left:1897.00px;top:405.00px;width:1.00px;height:30.50px;background:rgba(214,221,230,0.92);"></div>
<div style="position:absolute;left:1753.00px;top:406.00px;width:144.00px;height:1.00px;background:rgba(214,221,230,0.22);"></div>
<div style="position:absolute;left:1753.00px;top:433.50px;width:144.00px;height:1.00px;background:rgba(214,221,230,0.22);"></div>
<div style="position:absolute;left:1754.00px;top:405.00px;width:1.00px;height:29.50px;background:rgba(214,221,230,0.22);"></div>
<div style="position:absolute;left:1896.00px;top:405.00px;width:1.00px;height:29.50px;background:rgba(214,221,230,0.22);"></div>
<div style="position:absolute;left:1909.50px;top:405.00px;width:144.00px;height:29.50px;background:rgba(40,60,80,0.12);"></div>
<div style="position:absolute;left:1909.50px;top:405.00px;width:145.00px;height:1.00px;background:rgba(214,221,230,0.92);"></div>
<div style="position:absolute;left:1909.50px;top:434.50px;width:145.00px;height:1.00px;background:rgba(214,221,230,0.92);"></div>
<div style="position:absolute;left:1909.50px;top:405.00px;width:1.00px;height:30.50px;background:rgba(214,221,230,0.92);"></div>
<div style="position:absolute;left:2053.50px;top:405.00px;width:1.00px;height:30.50px;background:rgba(214,221,230,0.92);"></div>
<div style="position:absolute;left:1909.50px;top:406.00px;width:144.00px;height:1.00px;background:rgba(214,221,230,0.22);"></div>
<div style="position:absolute;left:1909.50px;top:433.50px;width:144.00px;height:1.00px;background:rgba(214,221,230,0.22);"></div>
<div style="position:absolute;left:1910.50px;top:405.00px;width:1.00px;height:29.50px;background:rgba(214,221,230,0.22);"></div>
<div style="position:absolute;left:2052.50px;top:405.00px;width:1.00px;height:29.50px;background:rgba(214,221,230,0.22);"></div>
<div style="position:absolute;left:1291.00px;top:474.99px;font:400 16.9px/16.9px 'Liberation Sans',sans-serif;color:#f0f0f0;white-space:pre;">L2 Cache</div>
<div style="position:absolute;left:1439.00px;top:467.00px;width:144.00px;height:29.50px;background:rgba(40,60,80,0.12);"></div>
<div style="position:absolute;left:1439.00px;top:467.00px;width:145.00px;height:1.00px;background:rgba(214,221,230,0.92);"></div>
<div style="position:absolute;left:1439.00px;top:496.50px;width:145.00px;height:1.00px;background:rgba(214,221,230,0.92);"></div>
<div style="position:absolute;left:1439.00px;top:467.00px;width:1.00px;height:30.50px;background:rgba(214,221,230,0.92);"></div>
<div style="position:absolute;left:1583.00px;top:467.00px;width:1.00px;height:30.50px;background:rgba(214,221,230,0.92);"></div>
<div style="position:absolute;left:1439.00px;top:468.00px;width:144.00px;height:1.00px;background:rgba(214,221,230,0.22);"></div>
<div style="position:absolute;left:1439.00px;top:495.50px;width:144.00px;height:1.00px;background:rgba(214,221,230,0.22);"></div>
<div style="position:absolute;left:1440.00px;top:467.00px;width:1.00px;height:29.50px;background:rgba(214,221,230,0.22);"></div>
<div style="position:absolute;left:1582.00px;top:467.00px;width:1.00px;height:29.50px;background:rgba(214,221,230,0.22);"></div>
<div style="position:absolute;left:1596.00px;top:467.00px;width:144.00px;height:29.50px;background:rgba(40,60,80,0.12);"></div>
<div style="position:absolute;left:1596.00px;top:467.00px;width:145.00px;height:1.00px;background:rgba(214,221,230,0.92);"></div>
<div style="position:absolute;left:1596.00px;top:496.50px;width:145.00px;height:1.00px;background:rgba(214,221,230,0.92);"></div>
<div style="position:absolute;left:1596.00px;top:467.00px;width:1.00px;height:30.50px;background:rgba(214,221,230,0.92);"></div>
<div style="position:absolute;left:1740.00px;top:467.00px;width:1.00px;height:30.50px;background:rgba(214,221,230,0.92);"></div>
<div style="position:absolute;left:1596.00px;top:468.00px;width:144.00px;height:1.00px;background:rgba(214,221,230,0.22);"></div>
<div style="position:absolute;left:1596.00px;top:495.50px;width:144.00px;height:1.00px;background:rgba(214,221,230,0.22);"></div>
<div style="position:absolute;left:1597.00px;top:467.00px;width:1.00px;height:29.50px;background:rgba(214,221,230,0.22);"></div>
<div style="position:absolute;left:1739.00px;top:467.00px;width:1.00px;height:29.50px;background:rgba(214,221,230,0.22);"></div>
<div style="position:absolute;left:1753.00px;top:467.00px;width:144.00px;height:29.50px;background:rgba(40,60,80,0.12);"></div>
<div style="position:absolute;left:1753.00px;top:467.00px;width:145.00px;height:1.00px;background:rgba(214,221,230,0.92);"></div>
<div style="position:absolute;left:1753.00px;top:496.50px;width:145.00px;height:1.00px;background:rgba(214,221,230,0.92);"></div>
<div style="position:absolute;left:1753.00px;top:467.00px;width:1.00px;height:30.50px;background:rgba(214,221,230,0.92);"></div>
<div style="position:absolute;left:1897.00px;top:467.00px;width:1.00px;height:30.50px;background:rgba(214,221,230,0.92);"></div>
<div style="position:absolute;left:1753.00px;top:468.00px;width:144.00px;height:1.00px;background:rgba(214,221,230,0.22);"></div>
<div style="position:absolute;left:1753.00px;top:495.50px;width:144.00px;height:1.00px;background:rgba(214,221,230,0.22);"></div>
<div style="position:absolute;left:1754.00px;top:467.00px;width:1.00px;height:29.50px;background:rgba(214,221,230,0.22);"></div>
<div style="position:absolute;left:1896.00px;top:467.00px;width:1.00px;height:29.50px;background:rgba(214,221,230,0.22);"></div>
<div style="position:absolute;left:1909.50px;top:467.00px;width:144.00px;height:29.50px;background:rgba(40,60,80,0.12);"></div>
<div style="position:absolute;left:1909.50px;top:467.00px;width:145.00px;height:1.00px;background:rgba(214,221,230,0.92);"></div>
<div style="position:absolute;left:1909.50px;top:496.50px;width:145.00px;height:1.00px;background:rgba(214,221,230,0.92);"></div>
<div style="position:absolute;left:1909.50px;top:467.00px;width:1.00px;height:30.50px;background:rgba(214,221,230,0.92);"></div>
<div style="position:absolute;left:2053.50px;top:467.00px;width:1.00px;height:30.50px;background:rgba(214,221,230,0.92);"></div>
<div style="position:absolute;left:1909.50px;top:468.00px;width:144.00px;height:1.00px;background:rgba(214,221,230,0.22);"></div>
<div style="position:absolute;left:1909.50px;top:495.50px;width:144.00px;height:1.00px;background:rgba(214,221,230,0.22);"></div>
<div style="position:absolute;left:1910.50px;top:467.00px;width:1.00px;height:29.50px;background:rgba(214,221,230,0.22);"></div>
<div style="position:absolute;left:2052.50px;top:467.00px;width:1.00px;height:29.50px;background:rgba(214,221,230,0.22);"></div>
<div style="position:absolute;left:1291.00px;top:535.99px;font:400 16.9px/16.9px 'Liberation Sans',sans-serif;color:#f0f0f0;white-space:pre;">L3 Cache</div>
<div style="position:absolute;left:1439.00px;top:528.00px;width:144.00px;height:29.50px;background:rgba(40,60,80,0.12);"></div>
<div style="position:absolute;left:1439.00px;top:528.00px;width:145.00px;height:1.00px;background:rgba(214,221,230,0.92);"></div>
<div style="position:absolute;left:1439.00px;top:557.50px;width:145.00px;height:1.00px;background:rgba(214,221,230,0.92);"></div>
<div style="position:absolute;left:1439.00px;top:528.00px;width:1.00px;height:30.50px;background:rgba(214,221,230,0.92);"></div>
<div style="position:absolute;left:1583.00px;top:528.00px;width:1.00px;height:30.50px;background:rgba(214,221,230,0.92);"></div>
<div style="position:absolute;left:1439.00px;top:529.00px;width:144.00px;height:1.00px;background:rgba(214,221,230,0.22);"></div>
<div style="position:absolute;left:1439.00px;top:556.50px;width:144.00px;height:1.00px;background:rgba(214,221,230,0.22);"></div>
<div style="position:absolute;left:1440.00px;top:528.00px;width:1.00px;height:29.50px;background:rgba(214,221,230,0.22);"></div>
<div style="position:absolute;left:1582.00px;top:528.00px;width:1.00px;height:29.50px;background:rgba(214,221,230,0.22);"></div>
<div style="position:absolute;left:1596.00px;top:528.00px;width:144.00px;height:29.50px;background:rgba(40,60,80,0.12);"></div>
<div style="position:absolute;left:1596.00px;top:528.00px;width:145.00px;height:1.00px;background:rgba(214,221,230,0.92);"></div>
<div style="position:absolute;left:1596.00px;top:557.50px;width:145.00px;height:1.00px;background:rgba(214,221,230,0.92);"></div>
<div style="position:absolute;left:1596.00px;top:528.00px;width:1.00px;height:30.50px;background:rgba(214,221,230,0.92);"></div>
<div style="position:absolute;left:1740.00px;top:528.00px;width:1.00px;height:30.50px;background:rgba(214,221,230,0.92);"></div>
<div style="position:absolute;left:1596.00px;top:529.00px;width:144.00px;height:1.00px;background:rgba(214,221,230,0.22);"></div>
<div style="position:absolute;left:1596.00px;top:556.50px;width:144.00px;height:1.00px;background:rgba(214,221,230,0.22);"></div>
<div style="position:absolute;left:1597.00px;top:528.00px;width:1.00px;height:29.50px;background:rgba(214,221,230,0.22);"></div>
<div style="position:absolute;left:1739.00px;top:528.00px;width:1.00px;height:29.50px;background:rgba(214,221,230,0.22);"></div>
<div style="position:absolute;left:1753.00px;top:528.00px;width:144.00px;height:29.50px;background:rgba(40,60,80,0.12);"></div>
<div style="position:absolute;left:1753.00px;top:528.00px;width:145.00px;height:1.00px;background:rgba(214,221,230,0.92);"></div>
<div style="position:absolute;left:1753.00px;top:557.50px;width:145.00px;height:1.00px;background:rgba(214,221,230,0.92);"></div>
<div style="position:absolute;left:1753.00px;top:528.00px;width:1.00px;height:30.50px;background:rgba(214,221,230,0.92);"></div>
<div style="position:absolute;left:1897.00px;top:528.00px;width:1.00px;height:30.50px;background:rgba(214,221,230,0.92);"></div>
<div style="position:absolute;left:1753.00px;top:529.00px;width:144.00px;height:1.00px;background:rgba(214,221,230,0.22);"></div>
<div style="position:absolute;left:1753.00px;top:556.50px;width:144.00px;height:1.00px;background:rgba(214,221,230,0.22);"></div>
<div style="position:absolute;left:1754.00px;top:528.00px;width:1.00px;height:29.50px;background:rgba(214,221,230,0.22);"></div>
<div style="position:absolute;left:1896.00px;top:528.00px;width:1.00px;height:29.50px;background:rgba(214,221,230,0.22);"></div>
<div style="position:absolute;left:1909.50px;top:528.00px;width:144.00px;height:29.50px;background:rgba(40,60,80,0.12);"></div>
<div style="position:absolute;left:1909.50px;top:528.00px;width:145.00px;height:1.00px;background:rgba(214,221,230,0.92);"></div>
<div style="position:absolute;left:1909.50px;top:557.50px;width:145.00px;height:1.00px;background:rgba(214,221,230,0.92);"></div>
<div style="position:absolute;left:1909.50px;top:528.00px;width:1.00px;height:30.50px;background:rgba(214,221,230,0.92);"></div>
<div style="position:absolute;left:2053.50px;top:528.00px;width:1.00px;height:30.50px;background:rgba(214,221,230,0.92);"></div>
<div style="position:absolute;left:1909.50px;top:529.00px;width:144.00px;height:1.00px;background:rgba(214,221,230,0.22);"></div>
<div style="position:absolute;left:1909.50px;top:556.50px;width:144.00px;height:1.00px;background:rgba(214,221,230,0.22);"></div>
<div style="position:absolute;left:1910.50px;top:528.00px;width:1.00px;height:29.50px;background:rgba(214,221,230,0.22);"></div>
<div style="position:absolute;left:2052.50px;top:528.00px;width:1.00px;height:29.50px;background:rgba(214,221,230,0.22);"></div>
<div style="position:absolute;left:1439.00px;top:590.00px;width:615.00px;height:116.00px;background:rgba(40,60,80,0.12);"></div>
<div style="position:absolute;left:1439.00px;top:590.00px;width:616.00px;height:1.00px;background:rgba(214,221,230,0.92);"></div>
<div style="position:absolute;left:1439.00px;top:591.00px;width:616.00px;height:1.00px;background:rgba(214,221,230,0.22);"></div>
<div style="position:absolute;left:1439.00px;top:706.00px;width:616.00px;height:1.00px;background:rgba(214,221,230,0.92);"></div>
<div style="position:absolute;left:1439.00px;top:707.00px;width:616.00px;height:1.00px;background:rgba(214,221,230,0.22);"></div>
<div style="position:absolute;left:1439.00px;top:590.00px;width:1.00px;height:117.00px;background:rgba(214,221,230,0.92);"></div>
<div style="position:absolute;left:1440.00px;top:590.00px;width:1.00px;height:117.00px;background:rgba(214,221,230,0.22);"></div>
<div style="position:absolute;left:2054.00px;top:590.00px;width:1.00px;height:117.00px;background:rgba(214,221,230,0.92);"></div>
<div style="position:absolute;left:2055.00px;top:590.00px;width:1.00px;height:117.00px;background:rgba(214,221,230,0.22);"></div>
<div style="position:absolute;left:1439.00px;top:619.00px;width:616.00px;height:1.00px;background:rgba(214,221,230,0.92);"></div>
<div style="position:absolute;left:1439.00px;top:620.00px;width:616.00px;height:1.00px;background:rgba(214,221,230,0.22);"></div>
<div style="position:absolute;left:1439.00px;top:648.00px;width:616.00px;height:1.00px;background:rgba(214,221,230,0.92);"></div>
<div style="position:absolute;left:1439.00px;top:649.00px;width:616.00px;height:1.00px;background:rgba(214,221,230,0.22);"></div>
<div style="position:absolute;left:1439.00px;top:677.00px;width:616.00px;height:1.00px;background:rgba(214,221,230,0.92);"></div>
<div style="position:absolute;left:1439.00px;top:678.00px;width:616.00px;height:1.00px;background:rgba(214,221,230,0.22);"></div>
<div style="position:absolute;left:1439.00px;top:706.00px;width:144.00px;height:29.00px;background:rgba(40,60,80,0.12);"></div>
<div style="position:absolute;left:1439.00px;top:706.00px;width:145.00px;height:1.00px;background:rgba(214,221,230,0.92);"></div>
<div style="position:absolute;left:1439.00px;top:707.00px;width:145.00px;height:1.00px;background:rgba(214,221,230,0.22);"></div>
<div style="position:absolute;left:1439.00px;top:735.00px;width:145.00px;height:1.00px;background:rgba(214,221,230,0.92);"></div>
<div style="position:absolute;left:1439.00px;top:736.00px;width:145.00px;height:1.00px;background:rgba(214,221,230,0.22);"></div>
<div style="position:absolute;left:1439.00px;top:706.00px;width:1.00px;height:30.00px;background:rgba(214,221,230,0.92);"></div>
<div style="position:absolute;left:1440.00px;top:706.00px;width:1.00px;height:30.00px;background:rgba(214,221,230,0.22);"></div>
<div style="position:absolute;left:1583.00px;top:706.00px;width:1.00px;height:30.00px;background:rgba(214,221,230,0.92);"></div>
<div style="position:absolute;left:1584.00px;top:706.00px;width:1.00px;height:30.00px;background:rgba(214,221,230,0.22);"></div>
<div style="position:absolute;left:1910.00px;top:706.00px;width:144.00px;height:29.00px;background:rgba(40,60,80,0.12);"></div>
<div style="position:absolute;left:1910.00px;top:706.00px;width:145.00px;height:1.00px;background:rgba(214,221,230,0.92);"></div>
<div style="position:absolute;left:1910.00px;top:707.00px;width:145.00px;height:1.00px;background:rgba(214,221,230,0.22);"></div>
<div style="position:absolute;left:1910.00px;top:735.00px;width:145.00px;height:1.00px;background:rgba(214,221,230,0.92);"></div>
<div style="position:absolute;left:1910.00px;top:736.00px;width:145.00px;height:1.00px;background:rgba(214,221,230,0.22);"></div>
<div style="position:absolute;left:1910.00px;top:706.00px;width:1.00px;height:30.00px;background:rgba(214,221,230,0.92);"></div>
<div style="position:absolute;left:1911.00px;top:706.00px;width:1.00px;height:30.00px;background:rgba(214,221,230,0.22);"></div>
<div style="position:absolute;left:2054.00px;top:706.00px;width:1.00px;height:30.00px;background:rgba(214,221,230,0.92);"></div>
<div style="position:absolute;left:2055.00px;top:706.00px;width:1.00px;height:30.00px;background:rgba(214,221,230,0.22);"></div>
<div style="position:absolute;left:1291.50px;top:596.99px;font:400 16.9px/16.9px 'Liberation Sans',sans-serif;color:#f0f0f0;white-space:pre;">CPU Type</div>
<div style="position:absolute;left:1447.30px;top:597.16px;font:400 16.7px/16.7px 'Liberation Sans',sans-serif;color:#f4f4f4;white-space:pre;">16-Core AMD Ryzen 9 9950X  (Granite Ridge, Socket AM5)</div>
<div style="position:absolute;left:1291.50px;top:625.99px;font:400 16.9px/16.9px 'Liberation Sans',sans-serif;color:#f0f0f0;white-space:pre;">CPU Stepping</div>
<div style="position:absolute;left:1447.30px;top:626.16px;font:400 16.7px/16.7px 'Liberation Sans',sans-serif;color:#f4f4f4;white-space:pre;">GNR-B0</div>
<div style="position:absolute;left:1291.50px;top:654.99px;font:400 16.9px/16.9px 'Liberation Sans',sans-serif;color:#f0f0f0;white-space:pre;">CPU Clock</div>
<div style="position:absolute;left:1447.30px;top:655.16px;font:400 16.7px/16.7px 'Liberation Sans',sans-serif;color:#f4f4f4;white-space:pre;">5725.0 MHz</div>
<div style="position:absolute;left:1291.50px;top:683.99px;font:400 16.9px/16.9px 'Liberation Sans',sans-serif;color:#f0f0f0;white-space:pre;">CPU FSB</div>
<div style="position:absolute;left:1447.30px;top:684.16px;font:400 16.7px/16.7px 'Liberation Sans',sans-serif;color:#f4f4f4;white-space:pre;">100.0 MHz  (original: 100 MHz)</div>
<div style="position:absolute;left:1291.50px;top:712.99px;font:400 16.9px/16.9px 'Liberation Sans',sans-serif;color:#f0f0f0;white-space:pre;">CPU Multiplier</div>
<div style="position:absolute;left:1447.30px;top:713.16px;font:400 16.7px/16.7px 'Liberation Sans',sans-serif;color:#f4f4f4;white-space:pre;">57.25x</div>
<div style="position:absolute;left:1745.50px;top:713.16px;font:400 16.7px/16.7px 'Liberation Sans',sans-serif;color:#f0f0f0;white-space:pre;">North Bridge Clock</div>
<div style="position:absolute;left:1917.50px;top:713.16px;font:400 16.7px/16.7px 'Liberation Sans',sans-serif;color:#f4f4f4;white-space:pre;">2100.0 MHz</div>
<div style="position:absolute;left:1439.00px;top:765.00px;width:144.00px;height:29.00px;background:rgba(40,60,80,0.12);"></div>
<div style="position:absolute;left:1439.00px;top:765.00px;width:145.00px;height:1.00px;background:rgba(214,221,230,0.92);"></div>
<div style="position:absolute;left:1439.00px;top:766.00px;width:145.00px;height:1.00px;background:rgba(214,221,230,0.22);"></div>
<div style="position:absolute;left:1439.00px;top:794.00px;width:145.00px;height:1.00px;background:rgba(214,221,230,0.92);"></div>
<div style="position:absolute;left:1439.00px;top:795.00px;width:145.00px;height:1.00px;background:rgba(214,221,230,0.22);"></div>
<div style="position:absolute;left:1439.00px;top:765.00px;width:1.00px;height:30.00px;background:rgba(214,221,230,0.92);"></div>
<div style="position:absolute;left:1440.00px;top:765.00px;width:1.00px;height:30.00px;background:rgba(214,221,230,0.22);"></div>
<div style="position:absolute;left:1583.00px;top:765.00px;width:1.00px;height:30.00px;background:rgba(214,221,230,0.92);"></div>
<div style="position:absolute;left:1584.00px;top:765.00px;width:1.00px;height:30.00px;background:rgba(214,221,230,0.22);"></div>
<div style="position:absolute;left:1910.00px;top:765.00px;width:144.00px;height:29.00px;background:rgba(40,60,80,0.12);"></div>
<div style="position:absolute;left:1910.00px;top:765.00px;width:145.00px;height:1.00px;background:rgba(214,221,230,0.92);"></div>
<div style="position:absolute;left:1910.00px;top:766.00px;width:145.00px;height:1.00px;background:rgba(214,221,230,0.22);"></div>
<div style="position:absolute;left:1910.00px;top:794.00px;width:145.00px;height:1.00px;background:rgba(214,221,230,0.92);"></div>
<div style="position:absolute;left:1910.00px;top:795.00px;width:145.00px;height:1.00px;background:rgba(214,221,230,0.22);"></div>
<div style="position:absolute;left:1910.00px;top:765.00px;width:1.00px;height:30.00px;background:rgba(214,221,230,0.92);"></div>
<div style="position:absolute;left:1911.00px;top:765.00px;width:1.00px;height:30.00px;background:rgba(214,221,230,0.22);"></div>
<div style="position:absolute;left:2054.00px;top:765.00px;width:1.00px;height:30.00px;background:rgba(214,221,230,0.92);"></div>
<div style="position:absolute;left:2055.00px;top:765.00px;width:1.00px;height:30.00px;background:rgba(214,221,230,0.22);"></div>
<div style="position:absolute;left:1439.00px;top:794.00px;width:615.00px;height:116.00px;background:rgba(40,60,80,0.12);"></div>
<div style="position:absolute;left:1439.00px;top:794.00px;width:616.00px;height:1.00px;background:rgba(214,221,230,0.92);"></div>
<div style="position:absolute;left:1439.00px;top:795.00px;width:616.00px;height:1.00px;background:rgba(214,221,230,0.22);"></div>
<div style="position:absolute;left:1439.00px;top:910.00px;width:616.00px;height:1.00px;background:rgba(214,221,230,0.92);"></div>
<div style="position:absolute;left:1439.00px;top:911.00px;width:616.00px;height:1.00px;background:rgba(214,221,230,0.22);"></div>
<div style="position:absolute;left:1439.00px;top:794.00px;width:1.00px;height:117.00px;background:rgba(214,221,230,0.92);"></div>
<div style="position:absolute;left:1440.00px;top:794.00px;width:1.00px;height:117.00px;background:rgba(214,221,230,0.22);"></div>
<div style="position:absolute;left:2054.00px;top:794.00px;width:1.00px;height:117.00px;background:rgba(214,221,230,0.92);"></div>
<div style="position:absolute;left:2055.00px;top:794.00px;width:1.00px;height:117.00px;background:rgba(214,221,230,0.22);"></div>
<div style="position:absolute;left:1439.00px;top:823.00px;width:616.00px;height:1.00px;background:rgba(214,221,230,0.92);"></div>
<div style="position:absolute;left:1439.00px;top:824.00px;width:616.00px;height:1.00px;background:rgba(214,221,230,0.22);"></div>
<div style="position:absolute;left:1439.00px;top:852.00px;width:616.00px;height:1.00px;background:rgba(214,221,230,0.92);"></div>
<div style="position:absolute;left:1439.00px;top:853.00px;width:616.00px;height:1.00px;background:rgba(214,221,230,0.22);"></div>
<div style="position:absolute;left:1439.00px;top:881.00px;width:616.00px;height:1.00px;background:rgba(214,221,230,0.92);"></div>
<div style="position:absolute;left:1439.00px;top:882.00px;width:616.00px;height:1.00px;background:rgba(214,221,230,0.22);"></div>
<div style="position:absolute;left:1291.50px;top:771.99px;font:400 16.9px/16.9px 'Liberation Sans',sans-serif;color:#f0f0f0;white-space:pre;">Memory Bus</div>
<div style="position:absolute;left:1447.30px;top:772.16px;font:400 16.7px/16.7px 'Liberation Sans',sans-serif;color:#f4f4f4;white-space:pre;">4200.0 MHz</div>
<div style="position:absolute;left:1291.50px;top:800.99px;font:400 16.9px/16.9px 'Liberation Sans',sans-serif;color:#f0f0f0;white-space:pre;">Memory Type</div>
<div style="position:absolute;left:1447.30px;top:801.16px;font:400 16.7px/16.7px 'Liberation Sans',sans-serif;color:#f4f4f4;white-space:pre;">Dual Channel DDR5-8400 SDRAM  (38-54-54-36 CR1)</div>
<div style="position:absolute;left:1291.50px;top:829.99px;font:400 16.9px/16.9px 'Liberation Sans',sans-serif;color:#f0f0f0;white-space:pre;">Chipset</div>
<div style="position:absolute;left:1447.30px;top:830.16px;font:400 16.7px/16.7px 'Liberation Sans',sans-serif;color:#f4f4f4;white-space:pre;">AMD 800-Series, AMD K19.6 FCH, AMD K19.6 IMC</div>
<div style="position:absolute;left:1291.50px;top:858.99px;font:400 16.9px/16.9px 'Liberation Sans',sans-serif;color:#f0f0f0;white-space:pre;">Motherboard</div>
<div style="position:absolute;left:1447.30px;top:859.16px;font:400 16.7px/16.7px 'Liberation Sans',sans-serif;color:#f4f4f4;white-space:pre;">Asus ROG Crosshair X870E Hero</div>
<div style="position:absolute;left:1291.50px;top:887.99px;font:400 16.9px/16.9px 'Liberation Sans',sans-serif;color:#f0f0f0;white-space:pre;">BIOS Version</div>
<div style="position:absolute;left:1447.30px;top:888.16px;font:400 16.7px/16.7px 'Liberation Sans',sans-serif;color:#f4f4f4;white-space:pre;">0303</div>
<div style="position:absolute;left:1745.50px;top:772.16px;font:400 16.7px/16.7px 'Liberation Sans',sans-serif;color:#f0f0f0;white-space:pre;">DRAM:FSB Ratio</div>
<div style="position:absolute;left:1917.50px;top:772.16px;font:400 16.7px/16.7px 'Liberation Sans',sans-serif;color:#f4f4f4;white-space:pre;">42:1</div>
<div style="position:absolute;left:1253.80px;width:800px;text-align:right;top:929.43px;font:400 16.5px/16.5px 'Liberation Sans',sans-serif;color:#b9b9b9;white-space:pre;">AIDA64 v7.35.7000 / BenchDLL 4.7.902.8-x64  (c) 1995-2024 FinalWire Ltd.</div>
<div style="position:absolute;left:1270.50px;top:970.00px;width:115.50px;height:34.00px;background:rgba(30,50,45,0.55);"></div>
<div style="position:absolute;left:1271.50px;top:971.00px;width:113.50px;height:32.00px;background:#68a893;"></div>
<div style="position:absolute;left:1271.50px;top:1001.00px;width:113.50px;height:2.00px;background:#7db9a6;"></div>
<div style="position:absolute;left:1178.25px;width:300px;text-align:center;top:979.49px;font:400 16.9px/16.9px 'Liberation Sans',sans-serif;color:#f5f5f5;white-space:pre;text-decoration-thickness:1px;text-underline-offset:2px;"><u>S</u>ave</div>
<div style="position:absolute;left:1590.00px;top:970.00px;width:168.00px;height:34.00px;background:rgba(30,50,45,0.55);"></div>
<div style="position:absolute;left:1591.00px;top:971.00px;width:166.00px;height:32.00px;background:#68a893;"></div>
<div style="position:absolute;left:1591.00px;top:1001.00px;width:166.00px;height:2.00px;background:#7db9a6;"></div>
<div style="position:absolute;left:1524.00px;width:300px;text-align:center;top:979.49px;font:400 16.9px/16.9px 'Liberation Sans',sans-serif;color:#f5f5f5;white-space:pre;text-decoration-thickness:1px;text-underline-offset:2px;">Start <u>B</u>enchmark</div>
<div style="position:absolute;left:1961.00px;top:970.00px;width:116.50px;height:34.00px;background:rgba(30,50,45,0.55);"></div>
<div style="position:absolute;left:1962.00px;top:971.00px;width:114.50px;height:32.00px;background:#68a893;"></div>
<div style="position:absolute;left:1962.00px;top:1001.00px;width:114.50px;height:2.00px;background:#7db9a6;"></div>
<div style="position:absolute;left:1869.25px;width:300px;text-align:center;top:979.49px;font:400 16.9px/16.9px 'Liberation Sans',sans-serif;color:#f5f5f5;white-space:pre;text-decoration-thickness:1px;text-underline-offset:2px;"><u>C</u>lose</div>
</body></html>
